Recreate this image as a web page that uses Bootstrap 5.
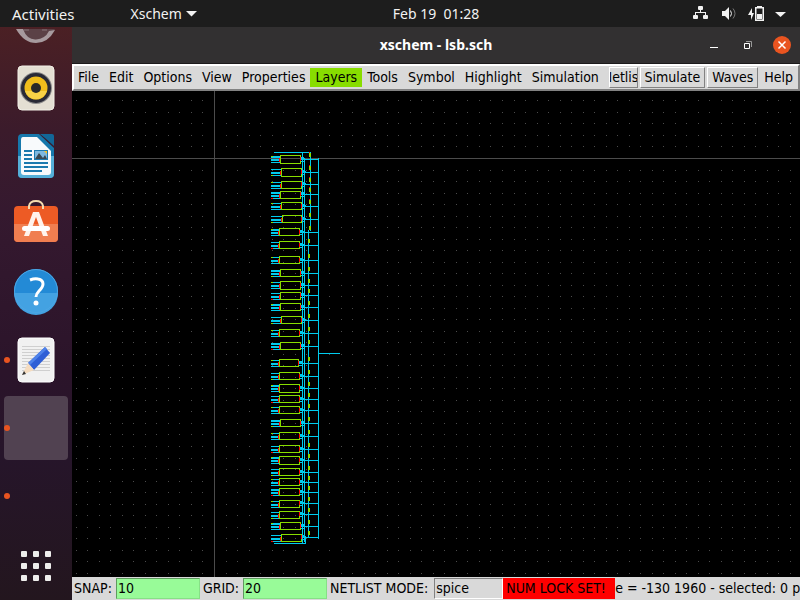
<!DOCTYPE html>
<html lang="en">
<head>
<meta charset="utf-8">
<meta name="viewport" content="width=device-width, initial-scale=1">
<title>xschem - lsb.sch</title>
<link href="https://cdn.jsdelivr.net/npm/bootstrap@5.3.0/dist/css/bootstrap.min.css" rel="stylesheet">
<style>
  body { background: #000; font-family: "Noto Sans", sans-serif; font-size: 14px; line-height: 20px; }
  button { color: inherit; }
  .plain { border: 0; background: none; padding: 0; }
  .topbar { background: #1d1d1d; color: #f2f2f2; height: 27px; padding: 0 12px; }
  .topbar .side { flex: 1 1 0; }
  .topbar .side.left { flex-basis: 72px; }
  .activities { font-size: 15px; line-height: 18px; }
  .app-menu { margin-left: 56px; }
  .dock { width: 72px; padding: 0 4px 2px; gap: 4px; background: linear-gradient(#4b2024, #3b1b2b 18%, #35192f 32%, #2b142a 60%, #26152a 75%, #23161e); }
  .slot { height: 64px; flex: none; border-radius: 4px; display: flex; align-items: center; justify-content: center; }
  .slot.cut { height: 25px; overflow: hidden; }
  .slot.current { background: #514251; }
  .slot.running::before { content: ""; position: absolute; left: 0; top: 29px; width: 6px; height: 6px; border-radius: 50%; background: #e95420; }
  .titlebar { background: #323031; color: #fff; height: 37px; border-bottom: 1px solid #1c1a1b; padding: 0 9px; font-weight: 700; }
  .titlebar .side { flex: 1 1 0; gap: 16px; }
  .tk { font-family: "DejaVu Sans Condensed", "DejaVu Sans", sans-serif; color: #000; }
  .menubar { background: #d9d9d9; border: 2px solid; border-color: #fff #828282 #828282 #fff; height: 27px; }
  .menubar button { padding: 0 5px; line-height: 19px; flex: none; }
  .menubar button:first-child { padding-left: 4px; }
  .menubar .layers { background: #88dd00; }
  .menubar .raised { border: 1px solid; border-color: #fff #828282 #828282 #fff; padding: 0 4px; margin: 0 1px; }
  .menubar .squeezed { flex: 0 1 29px; min-width: 0; overflow: hidden; padding: 0; }
  .sheet { background: #000; min-height: 0; }
  .statusbar { background: #d9d9d9; height: 23px; padding-left: 2px; line-height: 21px; }
  .statusbar > * { flex: none; }
  .statusbar input { width: 84px; height: 21px; border: 1px solid; border-color: #5f9a5f #86e086 #86e086 #5f9a5f; background: #98fb98; padding: 0 1px; margin: 0 3px 0 4px; outline: 0; }
  .statusbar input.mode { width: 69px; background: #d9d9d9; border-color: #828282 #fff #fff #828282; margin-left: 6px; margin-right: 0; }
  .numlock { background: #f00; height: 21px; width: 112px; padding-left: 3px; }
</style>
<script src="https://cdn.jsdelivr.net/npm/bootstrap@5.3.0/dist/js/bootstrap.bundle.min.js"></script>
</head>
<body class="vh-100 d-flex flex-column overflow-hidden">
<header class="topbar d-flex align-items-center flex-shrink-0">
  <div class="side left d-flex align-items-center">
    <button class="plain activities">Activities</button>
    <button class="plain app-menu d-flex align-items-center gap-1">Xschem
      <svg width="11" height="6"><path d="M0 0h11L5.500 5.500z" fill="#f2f2f2"/></svg></button>
  </div>
  <button class="plain">Feb 19&nbsp; 01:28</button>
  <div class="side d-flex justify-content-end">
    <button class="plain d-flex" aria-label="System menu">
      <svg width="96" height="20" fill="#f2f2f2">
        <rect x="6" y="2" width="5" height="4" rx="1"/><rect x="1" y="11" width="5" height="4" rx="1"/><rect x="11" y="11" width="5" height="4" rx="1"/>
        <path d="M8 5h1v3h5v3h-1V9H4v2H3V8h5z"/>
        <path d="M30 7h3l4-4v13l-4-4h-3z"/>
        <path d="M38.500 6.500q2 3 0 6" stroke="#f2f2f2" fill="none"/><path d="M41 4.500q4 5 0 10" stroke="#777" fill="none"/>
        <path d="M60 4l-4 7h3v5l3-7h-2z"/>
        <path d="M65 2h5v1h2v14h-9V3h2z"/><path d="M64.500 4.500h6v11h-6z" fill="#1d1d1d"/><rect x="65" y="10" width="5" height="5"/>
        <path d="M83 8h11l-5.500 5z"/>
      </svg></button>
  </div>
</header>
<div class="d-flex flex-grow-1" style="min-height:0">
  <nav class="dock d-flex flex-column flex-shrink-0" aria-label="Dock">
    <button class="plain slot cut" aria-label="Mail">
      <svg width="48" height="25"><path d="M5 2a22 22 0 0 0 38 0z" fill="#5b4146"/><path d="M4 2Q12 16 24 16T43 3l-6 1Q33 12 24 12.500T11 2z" fill="#a79a9e"/><path d="M12 3h5M30 3h5" stroke="#877579"/></svg>
    </button>
    <button class="plain slot" aria-label="Rhythmbox">
      <svg width="48" height="48"><rect x="6" y="2" width="36" height="44" rx="4" fill="#e4dfd3" stroke="#f3f0e8"/><circle cx="24" cy="24" r="16" fill="#8b8a8a"/><circle cx="24" cy="24" r="15" fill="#292a36"/><circle cx="24" cy="24" r="11.500" fill="#f0bd1c"/><path d="M13 27a11.500 11.500 0 0 0 22 0z" fill="#f8d246"/><circle cx="24" cy="24" r="5" fill="#292929"/></svg>
    </button>
    <button class="plain slot" aria-label="LibreOffice Writer">
      <svg width="48" height="48"><path d="M10 2h17l15 14v26q0 4-4 4H10q-4 0-4-4V6q0-4 4-4z" fill="#1678ac"/><path d="M6 24h36v18q0 4-4 4H10q-4 0-4-4z" fill="#55afd8"/><path d="M11 5h14l14 14v21q0 3-3 3H12q-3 0-3-3V8q0-3 2-3z" fill="#f8fafc"/><path d="M28 2h12q2 0 2 2v10L33 6z" fill="#126798"/><path d="M12 19h8M12 23h8M12 27h8M12 31h24M12 35h24M12 39h18" stroke="#1b79ae" stroke-width="2"/><rect x="22" y="18" width="14" height="10" fill="#1b79ae"/><rect x="23" y="19" width="12" height="8" fill="#7db8df"/><path d="M23 27l4-6 4 5 2-3 2 4z" fill="#394852"/><path d="M32 19h3v3z" fill="#f5c32c"/></svg>
    </button>
    <button class="plain slot" aria-label="Ubuntu Software">
      <svg width="48" height="48"><rect x="2" y="6" width="44" height="36" rx="4" fill="#ed5b25"/><path d="M2 24h44v14q0 4-4 4H6q-4 0-4-4z" fill="#f07e50"/><path d="M17 9V6q1-5 7-5t7 5v3" fill="none" stroke="#f5dcb0" stroke-width="2"/><path d="M21 12h6l9 24h-5L24 17l-7 19h-5z" fill="#fff3ec"/><rect x="10" y="26" width="28" height="5" rx="2.500" fill="#fff"/></svg>
    </button>
    <button class="plain slot" aria-label="Help">
      <svg width="48" height="48"><circle cx="24" cy="23" r="22" fill="#238ad6"/><path d="M2 25a22 22 0 0 0 44 0z" fill="#43a2e2"/><circle cx="24" cy="23" r="21.500" fill="none" stroke="#4ca6e4"/><path d="M18 12q5-2 8-1 5 1 5 5 0 3-4 7-3 3-3 6" fill="none" stroke="#fff" stroke-width="3"/><circle cx="24" cy="35" r="2.500" fill="#fff"/></svg>
    </button>
    <button class="plain slot running position-relative" aria-label="Text Editor">
      <svg width="48" height="48"><rect x="6" y="2" width="36" height="44" rx="4" fill="#f1f1f1" stroke="#fff"/><path d="M10 10.500h28M10 13.500h28M10 16.500h28M10 19.500h28M10 22.500h28M10 25.500h28M10 28.500h28M10 31.500h28M10 34.500h28" stroke="#cfcfcf"/><path d="M16 27L33 11l5 6-16 17z" fill="#2f5fd6"/><path d="M16 27L33 11l2 2-17 16z" fill="#4e82ea"/><path d="M16 27l6 7-12 5z" fill="#f5dcc0"/><path d="M12 35l2 3-4 1z" fill="#333"/></svg>
    </button>
    <button class="plain slot running current position-relative" aria-label="Xschem"></button>
    <button class="plain slot running position-relative" aria-label="Terminal"></button>
    <button class="plain slot mt-auto" aria-label="Show Applications">
      <svg width="32" height="32" fill="#eeeeec"><g id="r"><rect x="1" y="1" width="6" height="6" rx="1"/><rect x="13" y="1" width="6" height="6" rx="1"/><rect x="25" y="1" width="6" height="6" rx="1"/></g><use href="#r" y="12"/><use href="#r" y="24"/></svg>
    </button>
  </nav>
  <main class="d-flex flex-column flex-grow-1" style="min-width:0">
    <div class="titlebar d-flex align-items-center flex-shrink-0">
      <div class="side"></div>
      <div>xschem - lsb.sch</div>
      <div class="side d-flex justify-content-end align-items-center">
        <button class="plain d-flex" aria-label="Minimize"><svg width="18" height="18"><path d="M5 11h8v1H5z" fill="#fff"/></svg></button>
        <button class="plain d-flex" aria-label="Restore"><svg width="18" height="18" fill="none"><path d="M7 5.500h5.500V11" stroke="#999"/><path d="M5.500 7.500h5v5h-5z" stroke="#fff"/></svg></button>
        <button class="plain d-flex" aria-label="Close"><svg width="18" height="18"><circle cx="9" cy="9" r="9" fill="#e95420"/><path d="M5.500 5.500l7 7m0-7l-7 7" stroke="#fff" stroke-width="1.500"/></svg></button>
      </div>
    </div>
    <nav class="menubar tk d-flex align-items-center flex-shrink-0" aria-label="Main menu">
      <button class="plain">File</button><button class="plain">Edit</button><button class="plain">Options</button><button class="plain">View</button><button class="plain">Properties</button><button class="plain layers">Layers</button><button class="plain">Tools</button><button class="plain">Symbol</button><button class="plain">Highlight</button><button class="plain">Simulation</button>
      <button class="plain raised squeezed ms-auto d-flex justify-content-center">Netlist</button><button class="plain raised">Simulate</button><button class="plain raised">Waves</button><button class="plain">Help</button>
    </nav>
    <div class="sheet flex-grow-1 overflow-hidden">
      <svg class="w-100 h-100 d-block" shape-rendering="crispEdges" role="img" aria-label="Schematic"><g id="drawing" transform="translate(-72 -91)"></g></svg>
    </div>
    <footer class="statusbar tk d-flex align-items-center flex-shrink-0 overflow-hidden text-nowrap">
      <label for="snap">SNAP:</label><input id="snap" value="10">
      <label for="grid">GRID:</label><input id="grid" value="20">
      <label for="mode">NETLIST MODE:</label><input id="mode" class="mode" value="spice">
      <span class="numlock">NUM LOCK SET!</span><span>e = -130 1960 - selected: 0 p</span>
    </footer>
  </main>
</div>
<script>
  const cyan = '#00ccee', green = '#88dd00', red = '#ff0000', grey = '#4c4c4c';
  let out = '';
  const bar = (x, y, w, h, c) => { out += `<rect x="${x}" y="${y}" width="${w}" height="${h}" fill="${c}"/>`; };
  // snap grid around the origin at (214, 158)
  for (let i = -13; i < 160; i++)
    for (let j = -6; j < 120; j++)
      bar(Math.round(214 + i * 11.52), Math.round(158 + j * 11.52), 1, 1, grey);
  bar(214, 0, 1, 2000, grey);
  bar(0, 158, 3000, 1, grey);
  // gates: left edge, top edge, height, y of output wire
  const gates = [
    [280,155,9,159],[281,168,9,172],[281,181,8,184],[280,191,8,194],[281,202,8,206],[282,215,8,219],
    [279,228,8,232],[279,241,8,245],[279,256,8,260],[280,269,8,273],[280,281,9,285],[280,292,8,295],
    [280,303,8,307],[281,316,8,320],[279,329,8,333],[280,342,8,346],[279,359,8,363],[279,372,8,376],
    [279,384,9,388],[279,395,8,399],[279,406,8,410],[280,419,8,423],[279,432,8,436],[279,445,8,449],
    [279,456,9,460],[279,468,8,472],[279,478,8,482],[279,488,8,492],[279,500,8,503],[279,511,8,514],
    [280,522,8,526],[281,534,8,537]];
  bar(274, 152, 37, 1, cyan);
  bar(302, 152, 1, 391, cyan);
  bar(304, 158, 1, 384, cyan);
  bar(310, 152, 1, 79, cyan);
  bar(308, 230, 1, 308, cyan);
  bar(318, 158, 1, 381, cyan);
  bar(318, 353, 22, 1, cyan);
  bar(274, 543, 32, 1, cyan);
  bar(305, 538, 1, 6, cyan);
  gates.forEach(([x, y, h, o], i) => {
    const w = i === 16 || i === 5 ? 19 : 20, r = x + w;
    bar(271, y + 1, x - 271, i % 3 ? 1 : 2, cyan);
    bar(271, y + 4, x - 271, 2, cyan);
    bar(271, y + 7, x - 271, 1, cyan);
    bar(271, y + (i % 2 ? 7 : 1), 2, 1, i % 4 === 3 ? red : green);
    bar(x - 1, y + 3, 1, 4, red);
    bar(r, o - 2, 4, 1, cyan);
    bar(r, o + 2, 4, 1, cyan);
    bar(r, o - 1, 5, 2, cyan);
    bar(r, o, 318 - r, 1, cyan);
    out += `<rect x="${x + .5}" y="${y + .5}" width="${w}" height="${h - 1}" fill="none" stroke="${green}"/>`;
    bar(r, o - 2, 1, 4, red);
    const px = i < 7 ? 309 : 308;
    bar(px, o - 6, 2, 4, green);
    if (i < 5) bar(px, o - 7, 1, 1, red);
  });
  document.getElementById('drawing').innerHTML = out;
</script>
</body>
</html>
